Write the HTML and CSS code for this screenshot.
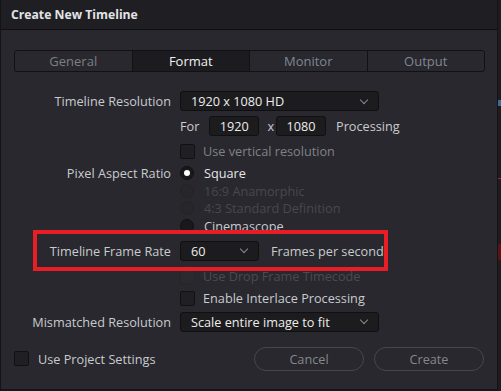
FILE: index.html
```html
<!DOCTYPE html>
<html lang="en">
<head>
  <meta charset="UTF-8" />
  <meta name="viewport" content="width=device-width, initial-scale=1.0"/>
  <title>Create New Timeline</title>
  <link rel="stylesheet" href="styles.css">
</head>
<body>
  <div class="screen">
    <div class="dialog">
      <div class="title-bar">Create New Timeline</div>

      <div class="content">
        <div class="tabs">
          <div class="tab">General</div>
          <div class="tab active">Format</div>
          <div class="tab blue">Monitor</div>
          <div class="tab blue">Output</div>
        </div>

        <div class="form">
          <div class="row row-res">
            <div class="label">Timeline Resolution</div>
            <div class="select wide"><span>1920 x 1080 HD</span><i class="chev"></i></div>
          </div>

          <div class="row row-for">
            <div class="label"></div>
            <div class="inline">
              <span class="text">For</span>
              <div class="num first">1920</div>
              <span class="text">x</span>
              <div class="num second">1080</div>
              <span class="text">Processing</span>
            </div>
          </div>

          <div class="row row-vert">
            <div class="label"></div>
            <label class="check muted"><span class="box"></span>Use vertical resolution</label>
          </div>

          <div class="row row-par">
            <div class="label par-label">Pixel Aspect Ratio</div>
            <div class="radios">
              <div class="radio on"><span class="dot"></span>Square</div>
              <div class="radio off"><span class="dot"></span>16:9 Anamorphic</div>
              <div class="radio off"><span class="dot"></span>4:3 Standard Definition</div>
              <div class="radio"><span class="dot"></span>Cinemascope</div>
            </div>
          </div>

          <div class="row row-fps">
            <div class="label">Timeline Frame Rate</div>
            <div class="inline">
              <div class="select short"><span>60</span><i class="chev"></i></div>
              <span class="text fps-text">Frames per second</span>
            </div>
          </div>

          <div class="row row-drop">
            <div class="label"></div>
            <label class="check off"><span class="box"></span>Use Drop Frame Timecode</label>
          </div>

          <div class="row row-inter">
            <div class="label"></div>
            <label class="check"><span class="box"></span>Enable Interlace Processing</label>
          </div>

          <div class="row row-mis">
            <div class="label">Mismatched Resolution</div>
            <div class="select wide"><span>Scale entire image to fit</span><i class="chev"></i></div>
          </div>
        </div>

        <div class="footer">
          <label class="check"><span class="box"></span>Use Project Settings</label>
          <div class="buttons">
            <button class="btn">Cancel</button>
            <button class="btn">Create</button>
          </div>
        </div>

        <!-- annotation box -->
        <div class="highlight"></div>
      </div>
    </div>

    <div class="edge">
      <span class="edge-blue"></span>
      <span class="edge-red"></span>
      <span class="edge-red2"></span>
    </div>
  </div>
</body>
</html>
```

FILE: styles.css
```css
body {
  margin: 0;
  background: #1a1a1c;
  font-family: "Open Sans", "Noto Sans", sans-serif;
  font-size: 12.7px;
  color: #c9cbce;
  overflow: hidden;
}

.screen {
  display: flex;
  width: 501px;
  height: 391px;
}

.dialog {
  width: 496px;
  height: 389px;
  background: #28282e;
  border: 1px solid #141416;
  border-top: none;
  display: flex;
  flex-direction: column;
}

.title-bar {
  height: 29px;
  line-height: 30px;
  padding-left: 10px;
  background: #1f1f23;
  border-bottom: 1px solid #0f0f11;
  color: #e4e4e6;
  font-weight: 700;
  font-size: 12.2px;
}

.content {
  position: relative;
  flex: 1;
}

/* tabs */
.tabs {
  display: flex;
  margin: 20px 0 0 13px;
  width: 469px;
  height: 20px;
  border: 1px solid #121214;
  border-radius: 3px;
  overflow: hidden;
}

.tab {
  flex: 1;
  text-align: center;
  line-height: 20px;
  font-size: 13px;
  color: #7d7f82;
  border-left: 1px solid #121214;
}

.tab:first-child {
  border-left: none;
}

.tab.blue {
  color: #7f8794;
}

.tab.active {
  background: #1c1c20;
  color: #f0f0f0;
}

/* form rows */
.form {
  display: flex;
  flex-direction: column;
}

.row {
  display: grid;
  grid-template-columns: 170px auto;
  column-gap: 9px;
  align-items: center;
}

.label {
  text-align: right;
  white-space: nowrap;
}

.row-res { margin-top: 19px; height: 20px; }
.row-for { margin-top: 5px; height: 20px; }
.row-vert { margin-top: 6px; height: 15px; }
.row-par { margin-top: 7.5px; align-items: start; }
.row-fps { margin-top: 6px; height: 20px; }
.row-drop { margin-top: 6.5px; height: 15px; }
.row-inter { margin-top: 7px; height: 15px; }
.row-mis { margin-top: 7.5px; height: 20px; }

.par-label {
  line-height: 17.6px;
}

.select {
  box-sizing: border-box;
  height: 20px;
  display: flex;
  align-items: center;
  justify-content: space-between;
  padding: 0 11px 0 10px;
  background: #1c1c1f;
  border: 1px solid #101012;
  border-radius: 3px;
  color: #ececec;
}

.select.wide { width: 199px; }
.select.short { width: 79px; }

.chev {
  width: 5px;
  height: 5px;
  border-right: 1.3px solid #8a8b8f;
  border-bottom: 1.3px solid #8a8b8f;
  transform: rotate(45deg);
  margin-top: -3px;
}

.inline {
  display: flex;
  align-items: center;
}

.num {
  box-sizing: border-box;
  width: 50px;
  height: 20px;
  line-height: 18px;
  text-align: center;
  background: #1c1c1f;
  border: 1px solid #101012;
  border-radius: 3px;
  color: #ececec;
}

.num.first { margin: 0 8px 0 10px; }
.num.second { margin: 0 10px 0 2px; }

.fps-text {
  margin-left: 12px;
}

/* checkboxes */
.check {
  display: flex;
  align-items: center;
  white-space: nowrap;
}

.box {
  box-sizing: border-box;
  width: 15px;
  height: 15px;
  margin-right: 8px;
  background: #202024;
  border: 1px solid #111113;
  border-radius: 2px;
}

.check.muted {
  color: #808286;
}

.check.off {
  color: #4a4b4f;
}

.check.off .box {
  background: #2a2a2f;
  border-color: #25252a;
}

/* radios */
.radios {
  display: flex;
  flex-direction: column;
}

.radio {
  display: flex;
  align-items: center;
  height: 17.6px;
  white-space: nowrap;
}

.radio .dot {
  box-sizing: border-box;
  width: 14px;
  height: 14px;
  margin-right: 10px;
  border-radius: 50%;
  background: #19191c;
  border: 1px solid #111113;
  display: flex;
  align-items: center;
  justify-content: center;
}

.radio.on .dot::after {
  content: "";
  width: 6px;
  height: 6px;
  border-radius: 50%;
  background: #ffffff;
}

.radio.on {
  color: #e6e6e8;
}

.radio.off {
  color: #47484c;
}

.radio.off .dot {
  background: #26262b;
  border-color: #242428;
}

/* footer */
.footer {
  display: flex;
  align-items: center;
  justify-content: space-between;
  margin: 15px 0 0 13px;
  padding-right: 13px;
}

.footer .box {
  margin-right: 9px;
}

.buttons {
  display: flex;
  gap: 10px;
}

.btn {
  width: 110px;
  height: 24px;
  background: transparent;
  border: 1px solid #46474c;
  border-radius: 12px;
  color: #85878b;
  font-family: inherit;
  font-size: 12.7px;
  padding: 0;
}

/* red annotation */
.highlight {
  position: absolute;
  left: 32px;
  top: 200px;
  width: 347px;
  height: 33px;
  border: 4px solid #e81d25;
}

/* neighbouring window strip */
.edge {
  position: relative;
  flex: 1;
  background: #1d1d20;
}

.edge span {
  position: absolute;
  left: 0;
  right: 0;
}

.edge-blue { top: 100px; height: 6px; background: #3b6d97; }
.edge-red { top: 178px; height: 1px; background: #a22; }
.edge-red2 { top: 244px; height: 16px; background: #5a1416; }
```
